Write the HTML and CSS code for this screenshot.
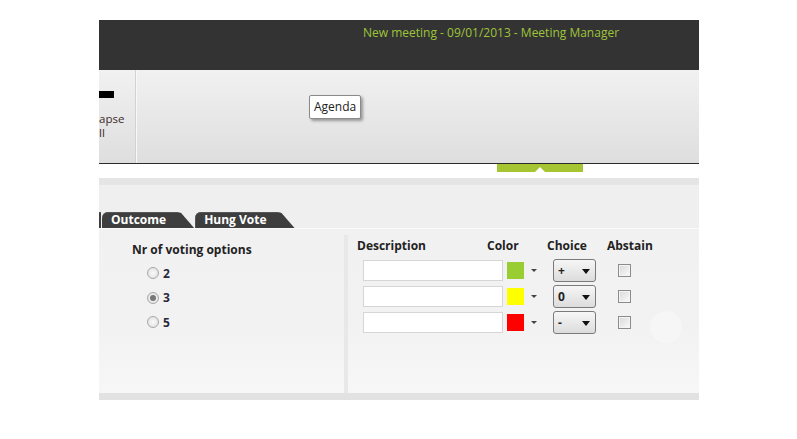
FILE: index.html
```html
<!DOCTYPE html>
<html lang="en">
<head>
    <meta charset="UTF-8">
    <meta name="viewport" content="width=device-width, initial-scale=1.0">
    <title>Meeting Manager</title>
    <link rel="stylesheet" href="styles.css">
</head>
<body>
    <div class="window">
        <div class="titlebar">New meeting - 09/01/2013 - Meeting Manager</div>

        <div class="ribbon">
            <div class="group">
                <div class="group-icon"></div>
                <div class="group-label">apse</div>
                <div class="group-label">ll</div>
            </div>
            <div class="tooltip">Agenda</div>
        </div>

        <div class="subbar"><div class="marker"></div></div>
        <div class="band"></div>

        <div class="tabarea">
            <div class="tabs">
                <div class="tab cut"></div>
                <div class="tab">Outcome</div>
                <div class="tab">Hung Vote</div>
            </div>
        </div>

        <div class="panel">
            <div class="col-left">
                <h4>Nr of voting options</h4>
                <label class="opt"><input type="radio" name="nr"> 2</label>
                <label class="opt"><input type="radio" name="nr" checked> 3</label>
                <label class="opt"><input type="radio" name="nr"> 5</label>
            </div>
            <div class="divider"></div>
            <div class="col-right">
                <div class="heads">
                    <span class="h-desc">Description</span>
                    <span class="h-color">Color</span>
                    <span class="h-choice">Choice</span>
                    <span class="h-abstain">Abstain</span>
                </div>
                <div class="row">
                    <input class="desc" type="text">
                    <span class="swatch green"></span>
                    <span class="mini-arrow"></span>
                    <span class="choice"><span class="val">+</span><span class="arrow"></span></span>
                    <input class="abstain" type="checkbox">
                </div>
                <div class="row">
                    <input class="desc" type="text">
                    <span class="swatch yellow"></span>
                    <span class="mini-arrow"></span>
                    <span class="choice"><span class="val">0</span><span class="arrow"></span></span>
                    <input class="abstain" type="checkbox">
                </div>
                <div class="row">
                    <input class="desc" type="text">
                    <span class="swatch red"></span>
                    <span class="mini-arrow"></span>
                    <span class="choice"><span class="val">-</span><span class="arrow"></span></span>
                    <input class="abstain" type="checkbox">
                </div>
                <div class="ghost"></div>
            </div>
        </div>
        <div class="band bottom"></div>
    </div>
</body>
</html>
```

FILE: styles.css
```css
body {
    margin: 0;
    background: #fff;
    font-family: "Open Sans", "DejaVu Sans", sans-serif;
    font-size: 12px;
    color: #222;
}
.window {
    margin: 20px 0 0 99px;
    width: 600px;
    overflow: hidden;
}
.titlebar {
    height: 50px;
    box-sizing: border-box;
    background: #333;
    color: #9ec43a;
    padding: 4px 0 0 264px;
    white-space: nowrap;
}
.ribbon {
    position: relative;
    height: 93px;
    background: linear-gradient(#f1f1f1, #dedede);
    border-bottom: 1px solid #2c2c2c;
    display: flex;
}
.group {
    width: 36px;
    border-right: 1px solid #d2d2d2;
    box-shadow: 1px 0 0 #f8f8f8;
    color: #3a2a2a;
}
.group-icon {
    width: 15px;
    height: 7px;
    background: #000;
    margin: 21px 0 14px;
}
.group-label {
    font-size: 11.5px;
    line-height: 14px;
}
.tooltip {
    position: absolute;
    left: 210px;
    top: 25px;
    background: #fff;
    border: 1px solid #8a8a8a;
    border-radius: 2px;
    padding: 3px 4px 4px;
    line-height: 15px;
    box-shadow: 2px 2px 3px rgba(0,0,0,.35);
}
.subbar {
    height: 14px;
    background: #fff;
    position: relative;
}
.marker {
    position: absolute;
    left: 398px;
    top: 0;
    width: 86px;
    height: 8px;
    background: #a5c632;
}
.marker::after {
    content: "";
    position: absolute;
    left: 38px;
    bottom: 0;
    border: 5px solid transparent;
    border-bottom-color: #fff;
    border-top: 0;
}
.band {
    height: 7px;
    background: #e5e5e5;
}
.band.bottom {
    background: #e2e2e2;
}
.tabarea {
    height: 43px;
    box-sizing: border-box;
    padding-top: 27px;
    background: #efefef;
}
.tabs {
    display: flex;
    gap: 1px;
    margin-left: -10px;
}
.tab {
    height: 16px;
    line-height: 16px;
    background: #3e3e3e;
    color: #fff;
    font-weight: bold;
    padding: 0 28px 0 9px;
    border-radius: 6px 0 0 0;
    clip-path: polygon(0 0, calc(100% - 18px) 0, calc(100% - 13px) 1px, 100% 100%, 0 100%);
    box-shadow: inset 0 1px 0 #555;
}
.tab.cut {
    width: 12px;
    padding: 0;
    clip-path: none;
}
.panel {
    position: relative;
    height: 165px;
    display: flex;
    background: linear-gradient(#f1f1f1, #f2f2f2 60%, #f7f7f7);
    border-top: 1px solid #fafafa;
    box-sizing: border-box;
}
.col-left {
    width: 245px;
    padding: 13px 0 0 33px;
    box-sizing: border-box;
}
.col-left h4 {
    margin: 0 0 3px;
    font-size: 12px;
    line-height: 16px;
}
.opt {
    display: flex;
    align-items: center;
    gap: 4px;
    height: 24.5px;
    padding-left: 15px;
    font-weight: bold;
    color: #2a2a3a;
}
.opt input {
    appearance: none;
    margin: 0;
    width: 12px;
    height: 12px;
    border-radius: 50%;
    border: 1px solid #a8a8a8;
    background: radial-gradient(#fafafa, #dcdcdc);
    box-sizing: border-box;
    position: relative;
}
.opt input:checked::after {
    content: "";
    position: absolute;
    left: 2px;
    top: 2px;
    width: 6px;
    height: 6px;
    border-radius: 50%;
    background: #777;
}
.divider {
    width: 4px;
    margin-top: 6px;
    background: #e8e8e8;
}
.col-right {
    flex: 1;
    position: relative;
    padding: 9px 0 0 0;
}
.heads {
    display: flex;
    font-weight: bold;
    line-height: 16px;
    height: 19px;
    padding-left: 9px;
}
.h-desc { width: 130px; }
.h-color { width: 60px; }
.h-choice { width: 60px; }
.row {
    display: flex;
    align-items: center;
    height: 26px;
    padding-left: 15px;
}
.desc {
    width: 140px;
    height: 21px;
    margin: 0 4px 0 0;
    box-sizing: border-box;
    border: 1px solid #d6d6d6;
    background: #fff;
}
.swatch {
    width: 17px;
    height: 17px;
}
.swatch.green { background: #9acd32; }
.swatch.yellow { background: #ffff00; }
.swatch.red { background: #ff0000; }
.mini-arrow {
    margin: 1px 16px 0 7px;
    border: 3px solid transparent;
    border-top: 3px solid #444;
    border-bottom: 0;
}
.choice {
    width: 43px;
    height: 23px;
    box-sizing: border-box;
    border: 1px solid #7a7a7a;
    border-radius: 3px;
    background: linear-gradient(#f6f6f6, #dcdcdc);
    display: flex;
    align-items: center;
    justify-content: space-between;
    padding: 0 5px 0 4px;
    font-weight: bold;
    color: #222;
}
.arrow {
    margin-top: 2px;
    border: 4px solid transparent;
    border-top: 5px solid #111;
    border-bottom: 0;
}
.abstain {
    appearance: none;
    margin: 0 0 0 22px;
    width: 13px;
    height: 13px;
    border: 1px solid #8c8c8c;
    background: linear-gradient(135deg, #d8d8d8, #fbfbfb);
    box-shadow: inset 0 0 0 1px #f4f4f4;
}
.ghost {
    position: absolute;
    left: 302px;
    top: 82px;
    width: 32px;
    height: 32px;
    border-radius: 50%;
    background: rgba(255,255,255,.3);
}
```
